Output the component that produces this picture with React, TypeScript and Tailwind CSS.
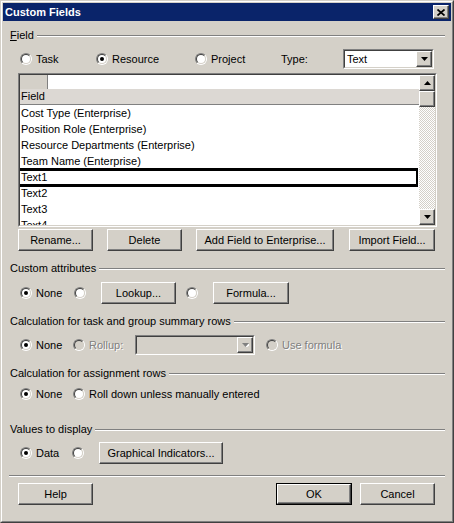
import React from "react";

const raised =
  "border border-t-white border-l-white border-r-[#404040] border-b-[#404040] shadow-[inset_-1px_-1px_0_#808080]";
const sunkenOuter =
  "border border-t-[#808080] border-l-[#808080] border-r-white border-b-white";
const sunkenInner =
  "border border-t-[#404040] border-l-[#404040] border-r-[#d4d0c8] border-b-[#d4d0c8]";
const disabledText = "text-[#808080] [text-shadow:1px_1px_0_#ffffff]";

const Radio: React.FC<{ checked?: boolean; disabled?: boolean }> = ({ checked, disabled }) => (
  <span className={`flex w-[12px] h-[12px] shrink-0 rounded-full ${sunkenOuter}`}>
    <span
      className={`flex flex-1 items-center justify-center rounded-full ${sunkenInner} ${
        disabled ? "bg-[#d4d0c8]" : "bg-white"
      }`}
    >
      {checked && <span className="w-[4px] h-[4px] rounded-full bg-black" />}
    </span>
  </span>
);

const Option: React.FC<{
  label?: React.ReactNode;
  checked?: boolean;
  disabled?: boolean;
  className?: string;
}> = ({ label, checked, disabled, className = "" }) => (
  <div className={`flex items-center shrink-0 ${className}`}>
    <Radio checked={checked} disabled={disabled} />
    {label && <span className={`ml-[4px] whitespace-nowrap ${disabled ? disabledText : ""}`}>{label}</span>}
  </div>
);

const Btn: React.FC<{ children: React.ReactNode; className?: string; isDefault?: boolean }> = ({
  children,
  className = "",
  isDefault,
}) =>
  isDefault ? (
    <div className={`h-[22px] border border-black flex ${className}`}>
      <div className={`flex-1 flex items-center justify-center ${raised}`}>{children}</div>
    </div>
  ) : (
    <div className={`h-[22px] flex items-center justify-center shrink-0 whitespace-nowrap ${raised} ${className}`}>
      {children}
    </div>
  );

const Arrow: React.FC<{ up?: boolean; disabled?: boolean }> = ({ up, disabled }) => (
  <svg width="7" height="4" viewBox="0 0 7 4">
    {disabled && <polygon points="1,1 8,1 4.5,5" fill="#ffffff" />}
    <polygon points={up ? "3.5,0 7,4 0,4" : "0,0 7,0 3.5,4"} fill={disabled ? "#808080" : "#000000"} />
  </svg>
);

const ArrowBtn: React.FC<{ up?: boolean; disabled?: boolean }> = ({ up, disabled }) => (
  <div className={`w-[16px] h-[16px] shrink-0 flex items-center justify-center bg-[#d4d0c8] ${raised}`}>
    <Arrow up={up} disabled={disabled} />
  </div>
);

const GroupHeader: React.FC<{ children: React.ReactNode; className?: string }> = ({ children, className = "" }) => (
  <div className={`flex items-center h-[13px] ${className}`}>
    <span className="whitespace-nowrap leading-[13px]">{children}</span>
    <div className="flex-1 ml-[3px] h-[2px] border-t border-t-[#808080] border-b border-b-white" />
  </div>
);

const fields = [
  "Cost Type (Enterprise)",
  "Position Role (Enterprise)",
  "Resource Departments (Enterprise)",
  "Team Name (Enterprise)",
  "Text1",
  "Text2",
  "Text3",
  "Text4",
];

export default function App() {
  return (
    <div className="w-[454px] h-[523px] bg-[#d4d0c8] font-['Liberation_Sans',Arial,sans-serif] text-[11px] text-black select-none">
      <div className="h-full border border-t-[#d4d0c8] border-l-[#d4d0c8] border-r-[#404040] border-b-[#404040]">
        <div className="h-full border border-t-white border-l-white border-r-[#808080] border-b-[#808080] p-[1px] flex flex-col">
          {/* Title bar */}
          <div className="h-[18px] bg-[#0a246a] flex items-center pl-[2px] pr-[2px]">
            <span className="flex-1 font-bold text-white">Custom Fields</span>
            <div className={`w-[16px] h-[14px] bg-[#d4d0c8] flex items-center justify-center ${raised}`}>
              <svg width="8" height="7" viewBox="0 0 8 7">
                <path d="M0.5 0.5 L7.5 6.5 M7.5 0.5 L0.5 6.5" stroke="#000" strokeWidth="1.7" />
              </svg>
            </div>
          </div>

          <div className="flex flex-col pl-[7px] pr-[6px]">
            {/* Field group */}
            <GroupHeader className="mt-[8px]">
              <span className="underline">F</span>ield
            </GroupHeader>
            <div className="mt-[7px] h-[20px] flex items-center pl-[10px]">
              <Option label="Task" className="w-[76px]" />
              <Option label="Resource" checked className="w-[99px]" />
              <Option label="Project" className="w-[86px]" />
              <span className="w-[62px] shrink-0">Type:</span>
              <div className={`w-[91px] h-[20px] flex ${sunkenOuter}`}>
                <div className={`flex-1 flex items-center bg-white ${sunkenInner}`}>
                  <span className="flex-1 pl-[2px]">Text</span>
                  <ArrowBtn />
                </div>
              </div>
            </div>

            {/* Field list */}
            <div className={`mt-[4px] ml-[8px] w-[419px] h-[154px] flex ${sunkenOuter}`}>
              <div className={`flex-1 flex bg-white overflow-hidden ${sunkenInner}`}>
                <div className="flex-1 flex flex-col overflow-hidden">
                  <div className="h-[14px] shrink-0 flex">
                    <div className="w-[28px] bg-[#d4d0c8] border-r border-r-[#808080]" />
                    <div className="flex-1 bg-white" />
                  </div>
                  <div className="h-[16px] shrink-0 bg-[#dcd8d3] border-b border-b-[#808080] leading-[15px] pl-[1px]">
                    Field
                  </div>
                  {fields.map((f) => (
                    <div key={f} className="relative h-[16px] shrink-0 leading-[16px] pl-[1px] whitespace-nowrap">
                      {f}
                      {f === "Text1" && (
                        <div className="absolute -top-[1px] -bottom-[2px] left-0 right-[1px] border-y-[3px] border-r-2 border-black" />
                      )}
                    </div>
                  ))}
                </div>
                <div className="w-[16px] flex flex-col">
                  <ArrowBtn up />
                  <div className={`h-[16px] shrink-0 bg-[#d4d0c8] ${raised}`} />
                  <div className="flex-1 bg-[repeating-conic-gradient(#ffffff_0%_25%,#d4d0c8_0%_50%)] bg-[length:2px_2px]" />
                  <ArrowBtn />
                </div>
              </div>
            </div>

            <div className="mt-[2px] h-[22px] flex pl-[8px]">
              <Btn className="w-[75px]">Rename...</Btn>
              <Btn className="w-[75px] ml-[14px]">Delete</Btn>
              <Btn className="w-[138px] ml-[14px]">Add Field to Enterprise...</Btn>
              <Btn className="w-[86px] ml-[15px]">Import Field...</Btn>
            </div>

            {/* Custom attributes */}
            <GroupHeader className="mt-[11px]">Custom attributes</GroupHeader>
            <div className="mt-[7px] h-[22px] flex items-center pl-[10px]">
              <Option label="None" checked className="w-[54px]" />
              <Option className="w-[27px]" />
              <Btn className="w-[75px]">Lookup...</Btn>
              <Option className="w-[27px] ml-[10px]" />
              <Btn className="w-[76px]">Formula...</Btn>
            </div>

            {/* Calculation for task and group summary rows */}
            <GroupHeader className="mt-[11px]">Calculation for task and group summary rows</GroupHeader>
            <div className="mt-[6px] h-[22px] flex items-center pl-[10px]">
              <Option label="None" checked className="w-[53px]" />
              <Option label="Rollup:" disabled className="w-[62px]" />
              <div className={`w-[120px] h-[20px] flex ${sunkenOuter}`}>
                <div className={`flex-1 flex items-center justify-end bg-[#d4d0c8] ${sunkenInner}`}>
                  <ArrowBtn disabled />
                </div>
              </div>
              <Option label="Use formula" disabled className="ml-[11px]" />
            </div>

            {/* Calculation for assignment rows */}
            <GroupHeader className="mt-[11px]">Calculation for assignment rows</GroupHeader>
            <div className="mt-[3px] h-[22px] flex items-center pl-[10px]">
              <Option label="None" checked className="w-[53px]" />
              <Option label="Roll down unless manually entered" />
            </div>

            {/* Values to display */}
            <GroupHeader className="mt-[18px]">Values to display</GroupHeader>
            <div className="mt-[6px] h-[22px] flex items-center pl-[10px]">
              <Option label="Data" checked className="w-[52px]" />
              <Option className="w-[27px]" />
              <Btn className="w-[124px]">Graphical Indicators...</Btn>
            </div>

            <div className="mt-[11px] -ml-[1px] h-[2px] border-t border-t-[#808080] border-b border-b-white" />

            <div className="mt-[6px] h-[22px] flex pl-[8px] pr-[10px]">
              <Btn className="w-[75px]">Help</Btn>
              <div className="flex-1" />
              <Btn isDefault className="w-[76px]">OK</Btn>
              <Btn className="w-[75px] ml-[8px]">Cancel</Btn>
            </div>
          </div>
        </div>
      </div>
    </div>
  );
}
